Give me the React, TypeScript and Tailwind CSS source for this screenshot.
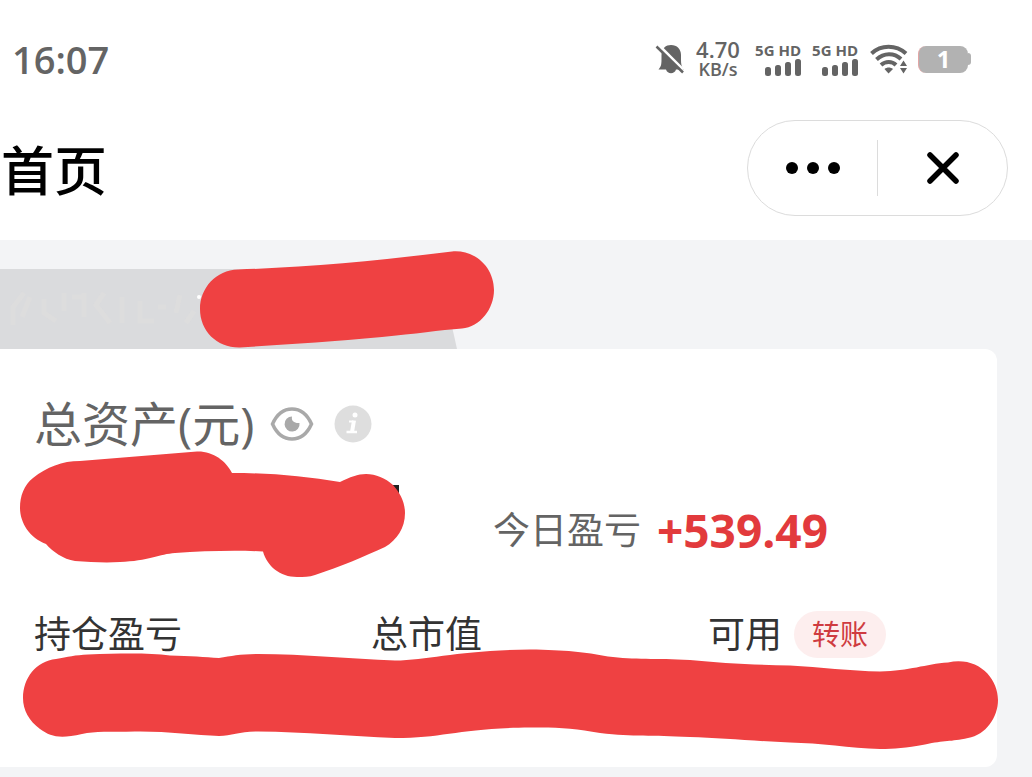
import React from 'react';

function BellOff() {
  return (
    <svg viewBox="0 0 30 32" className="h-8 w-[30px]" fill="none">
      <path
        d="M3.500 26.500C6.500 23 6.500 21 6.500 15v-3C6.500 5 11 2 16 2c6 0 10 4 10 10v5c0 4 .5 6.500 2.500 9.500H21c-1.500 5-8.500 5-10 0z"
        fill="#646464"
      />
      <path d="M2.500 1L28 26.500" stroke="#fff" strokeWidth="3" />
      <path d="M1.500 3.500L28 29.500" stroke="#646464" strokeWidth="2.500" />
    </svg>
  );
}

function Signal() {
  return (
    <div className="flex w-12 flex-col items-end gap-px">
      <span className="text-[15px] leading-4 font-bold whitespace-nowrap">5G HD</span>
      <svg viewBox="0 0 36 17" className="h-[17px] w-9" fill="#646464">
        <rect x="0" y="8" width="6" height="9" rx="2.500" />
        <rect x="10" y="6" width="6" height="11" rx="2.500" />
        <rect x="20" y="3" width="6" height="14" rx="2.500" />
        <rect x="30" y="0" width="6" height="17" rx="2.500" />
      </svg>
    </div>
  );
}

function Wifi() {
  return (
    <svg viewBox="0 0 38 30" className="h-[30px] w-[38px]" fill="none" stroke="#646464" strokeWidth="4">
      <path d="M1.500 9.500C11 .5 26 .5 36 9.500" />
      <path d="M6.500 15.500C14 8.500 24 8.500 31 15" />
      <path d="M11 21c4.500-4 11-4 15 0" />
      <path d="M14.500 25c2.500-2 6-2 8.500 0L18.500 29.500z" fill="#646464" stroke="none" />
      <path d="M30 22l3.500-5.500L37 22zM30 24h7l-3.500 5.500z" fill="#646464" stroke="none" />
    </svg>
  );
}

function Battery() {
  return (
    <div className="flex items-center" role="img" aria-label="battery">
      <div className="flex h-[27px] w-[50px] items-center justify-center rounded-lg border-l border-[#e3a5a5] bg-[#b2b2b2] text-2xl font-bold text-white">
        1
      </div>
      <div className="h-3 w-[3px] rounded-r-full bg-[#b2b2b2]"></div>
    </div>
  );
}

function StatusBar() {
  return (
    <div className="flex h-[120px] items-center justify-between pr-[61px] pb-[2px] pl-3 text-[#646464]">
      <span className="text-[38px] leading-10 font-semibold">16:07</span>
      <div className="flex items-center">
        <BellOff />
        <div className="mr-3 ml-[10px] w-[46px] text-center font-semibold whitespace-nowrap">
          <div className="text-[22px] leading-5">4.70</div>
          <div className="text-lg leading-5">KB/s</div>
        </div>
        <div className="flex gap-[9px]">
          <Signal />
          <Signal />
        </div>
        <div className="mr-[10px] ml-3">
          <Wifi />
        </div>
        <Battery />
      </div>
    </div>
  );
}

function NavBar() {
  return (
    <header className="flex items-center justify-between pr-6 pb-6">
      <h1 className="pt-[6px] pl-px text-[53px] leading-[90px] font-medium text-black">首页</h1>
      <div className="flex h-24 w-[261px] items-center rounded-full border border-[#dcdcdc]">
        <button aria-label="更多" className="flex h-full flex-1 items-center justify-center gap-[9px]">
          <span className="size-3 rounded-full bg-black"></span>
          <span className="size-3 rounded-full bg-black"></span>
          <span className="size-3 rounded-full bg-black"></span>
        </button>
        <div className="h-14 w-px bg-[#dcdcdc]"></div>
        <button aria-label="关闭" className="flex h-full flex-1 items-center justify-center">
          <svg viewBox="0 0 32 32" className="size-8" stroke="#000" strokeWidth="5.500" strokeLinecap="round">
            <path d="M3 3l26 26M29 3L3 29" />
          </svg>
        </button>
      </div>
    </header>
  );
}

function AccountTab() {
  return (
    <div className="relative">
      <svg viewBox="0 0 460 80" className="h-20 w-[460px]">
        <path d="M0 0h420c18 0 28 38 37 80H0z" fill="#dadbdd" />
        <g stroke="#dfdedd" strokeWidth="5" fill="none" opacity=".6">
          <path d="M24 24L13 38v18M30 28l-8 20M44 30v14l12 8M64 24v18M72 28h14M84 24v24M104 24l-8 12 14 18M122 28v26M140 32v20h14M166 38h-8M180 26l-4 18M194 42l-8 12" />
        </g>
        <circle cx="199" cy="28" r="2" fill="#fff" />
      </svg>
      <svg viewBox="190 249 310 100" className="absolute -top-5 left-[190px] h-[100px] w-[310px]">
        <path
          d="M238 269.500C310 267 380 260.500 452 251.500C476 249.500 494 268 494 290C494 309 480 327 462 328.500C440 330 415 334 382 337C330 342 285 344.500 240 347.500C217 348 200 331 200 309C200 288 216 270 238 269.500Z"
          fill="#ef4142"
        />
      </svg>
    </div>
  );
}

function EyeIcon() {
  return (
    <svg viewBox="0 0 44 36" className="h-9 w-11" fill="none">
      <path
        d="M2.500 18C7 8 14 3 22 3s15 5 19.500 15C37 28 30 33 22 33S7 28 2.500 18z"
        stroke="#a9a9a9"
        strokeWidth="3.500"
      />
      <path d="M22 10.500c-1 4.500 2.500 7 7.500 6.500a7.500 7.500 0 1 1-7.500-6.500z" fill="#a9a9a9" />
    </svg>
  );
}

function InfoIcon() {
  return (
    <svg viewBox="0 0 38 38" className="size-[38px]">
      <circle cx="19" cy="19" r="18.500" fill="#dedede" />
      <circle cx="21" cy="10" r="2.500" fill="#fff" />
      <path d="M15 16.500h3.500" stroke="#fff" strokeWidth="2" />
      <path d="M20 15.500L18 27" stroke="#fff" strokeWidth="4" />
      <path d="M12.500 27H23" stroke="#fff" strokeWidth="2.500" />
    </svg>
  );
}

function AssetCard() {
  return (
    <section className="relative mr-[35px] rounded-r-xl bg-white pt-10 pl-[34px]">
      <div className="flex h-[70px] items-center">
        <h2 className="text-5xl text-[#646464]">总资产(元)</h2>
        <button aria-label="显示资产" className="ml-4">
          <EyeIcon />
        </button>
        <button aria-label="说明" className="ml-5">
          <InfoIcon />
        </button>
      </div>

      <div className="flex h-[142px] items-center pl-[459px] whitespace-nowrap">
        <span className="text-[37px] text-[#646464]">今日盈亏</span>
        <span className="ml-4 text-[46px] font-bold text-[#e23a3c]">+539.49</span>
      </div>

      <div className="grid h-[66px] grid-cols-3 items-center gap-12 text-[37px] text-[#333]">
        <span>持仓盈亏</span>
        <span>总市值</span>
        <div className="flex items-center gap-3">
          <span>可用</span>
          <button className="h-[47px] rounded-full bg-[#fdeeee] px-[18px] text-[28px] leading-[45px] text-[#cf3b40]">
            转账
          </button>
        </div>
      </div>
      <div className="h-[100px]"></div>

      {/* marker over the balance */}
      <svg viewBox="10 445 400 140" className="absolute top-24 left-[10px] h-[140px] w-[400px]">
        <path d="M380 485h19v14h-19z" fill="#222" />
        <path
          d="M20 508C20 496 24 485 33 478C47 467 62 461 80 461L197 451.500C213 451 226 461 232 473C268 473 305 476 340 482C350 477 358 474 366 474C376 474 385 478 393 485C400 493 405 502 405 513C405 528 397 540 385 547C365 556 340 567 315 575C309 577 304 577 297 577C280 577 267 566 263 551.500C235 550 205 551 175 553C160 554 148 561 120 562C105 563 90 562 75 561C63 559 53 552 46 544C30 538 20 523 20 508Z"
          fill="#ef4142"
        />
      </svg>

      {/* marker over the three values */}
      <svg viewBox="15 645 990 110" className="absolute top-[296px] left-[15px] h-[110px] w-[990px]">
        <path
          d="M23 698C23 678 36 661 56 659C68 657 75 655 88 654.500C125 653 150 653 170 655.500C190 656 205 657 219 658C232 656 240 654 258 654C305 654 350 659 395 660.500C430 660 460 650 530 649.500C565 650 585 652 608 656.500C635 660 655 658 690 660C720 663 755 665 790 665.500C820 667 850 671 880 671.500C910 671 925 664 948 662.500C978 656 998 678 998 700C998 717 986 735 968 738C950 742 945 740 925 744.500C905 748 895 749 880 749C850 748 820 743 790 742.500C755 741 720 738 690 737C650 735 635 737 600 733C575 728 555 727 530 727.500C460 728 445 738 395 738C350 736 305 732 258 731.500C240 731 232 736 219 736C195 735 165 731 135 731.500C110 732 95 731 82 734C60 739 51 737 40 729C29 721 23 710 23 698Z"
          fill="#ef4142"
        />
      </svg>
    </section>
  );
}

export default function App() {
  return (
    <div className="min-h-screen overflow-x-hidden bg-[#f3f4f6] font-['Open_Sans','Noto_Sans_CJK_SC',sans-serif]">
      <div className="bg-white">
        <StatusBar />
        <NavBar />
      </div>
      <main className="pt-[29px] pb-[10px]">
        <AccountTab />
        <AssetCard />
      </main>
    </div>
  );
}
